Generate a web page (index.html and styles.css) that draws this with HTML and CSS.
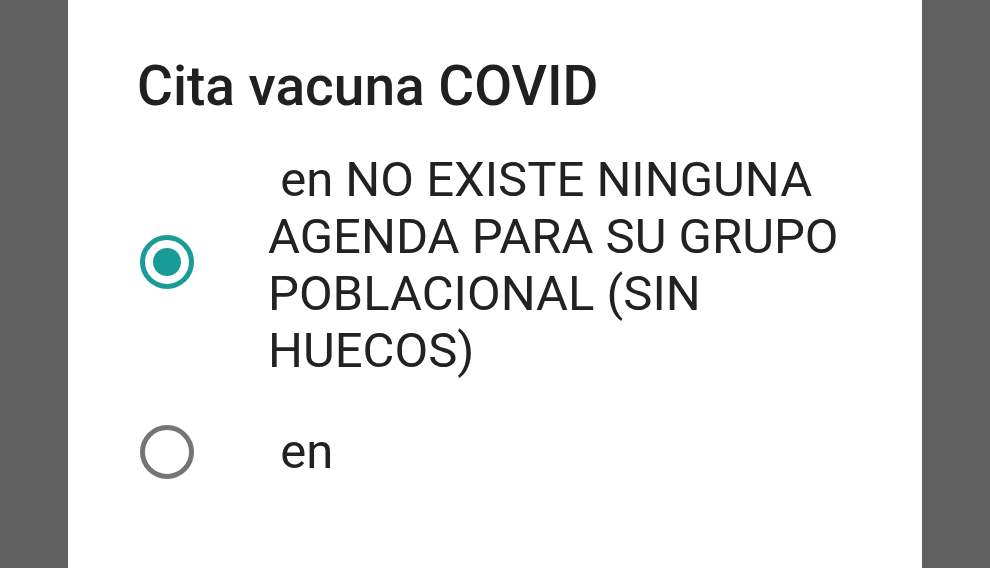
FILE: index.html
```html
<!DOCTYPE html>
<html lang="es">
<head>
<meta charset="utf-8">
<title>Cita vacuna COVID</title>
<link rel="stylesheet" href="styles.css">
</head>
<body>
<div class="screen">
  <div class="dialog">
    <h1 class="title">Cita vacuna COVID</h1>
    <div class="options">
      <label class="option option-first">
        <span class="radio radio-checked"><span class="dot"></span></span>
        <span class="label-text">&nbsp;en NO EXISTE NINGUNA AGENDA PARA SU GRUPO POBLACIONAL (SIN HUECOS)</span>
      </label>
      <label class="option">
        <span class="radio"></span>
        <span class="label-text">&nbsp;en</span>
      </label>
    </div>
  </div>
</div>
</body>
</html>
```
FILE: styles.css
```css
html, body {
  margin: 0;
  padding: 0;
  height: 100%;
  overflow: hidden;
}
body {
  background: #606060;
  font-family: Roboto, "Liberation Sans", sans-serif;
}
.screen {
  height: 568px;
  display: flex;
}
.dialog {
  margin-left: 68px;
  width: 854px;
  height: 100%;
  background: #ffffff;
  box-sizing: border-box;
  padding: 56px 40px 0 69px;
}
.title {
  margin: 0;
  font-size: 55px;
  line-height: 60px;
  font-weight: 500;
  color: #202020;
}
.options {
  display: flex;
  flex-direction: column;
  gap: 44px;
  margin-top: 35px;
}
.option {
  display: flex;
  align-items: center;
}
.radio {
  flex: 0 0 auto;
  width: 54px;
  height: 54px;
  box-sizing: border-box;
  border: 5px solid #757575;
  border-radius: 50%;
  margin-left: 3px;
  margin-right: 74px;
  display: flex;
  align-items: center;
  justify-content: center;
}
.option-first .radio {
  margin-top: -6px;
}
.radio-checked {
  border-color: #189c95;
}
.dot {
  width: 28px;
  height: 28px;
  border-radius: 50%;
  background: #189c95;
}
.label-text {
  font-size: 49px;
  line-height: 57px;
  color: #222222;
  max-width: 600px;
}
```
